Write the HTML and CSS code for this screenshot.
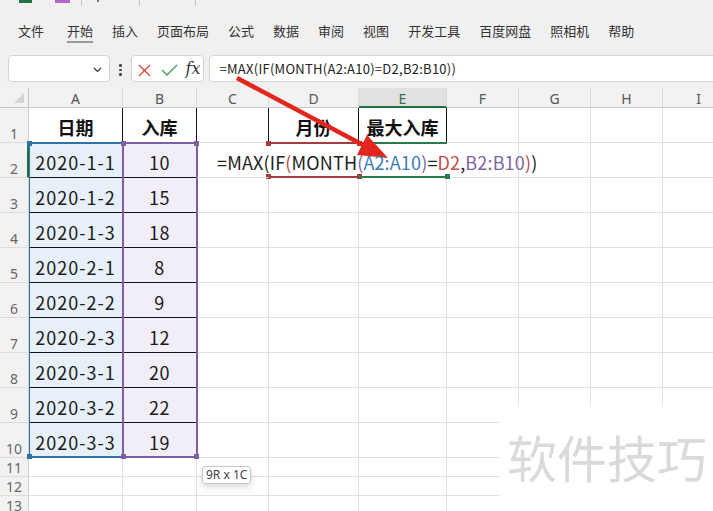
FILE: index.html
```html
<!DOCTYPE html>
<html lang="zh-CN">
<head>
<meta charset="utf-8">
<title>Excel</title>
<link rel="stylesheet" href="styles.css">
</head>
<body>
<div class="app">
  <div class="topstrip">
    <span class="ts-green"></span>
    <span class="ts-purple"></span>
    <span class="ts-sep s1"></span>
    <span class="ts-mark"></span>
    <span class="ts-sep s2"></span>
    <span class="ts-sep s3"></span>
  </div>
  <nav class="menu">
    <span class="mi">文件</span>
    <span class="mi active">开始</span>
    <span class="mi">插入</span>
    <span class="mi">页面布局</span>
    <span class="mi">公式</span>
    <span class="mi">数据</span>
    <span class="mi">审阅</span>
    <span class="mi">视图</span>
    <span class="mi">开发工具</span>
    <span class="mi">百度网盘</span>
    <span class="mi">照相机</span>
    <span class="mi">帮助</span>
  </nav>
  <div class="fbar">
    <div class="namebox">
      <svg class="chev" width="9" height="6" viewBox="0 0 9 6"><path d="M1 1 L4.5 4.5 L8 1" fill="none" stroke="#333" stroke-width="1.2"/></svg>
    </div>
    <div class="vdots"><i></i><i></i><i></i></div>
    <div class="fbtns">
      <svg width="13" height="13" viewBox="0 0 13 13"><path d="M1 1 L12 12 M12 1 L1 12" stroke="#e0453a" stroke-width="1.4" fill="none"/></svg>
      <svg width="17" height="12" viewBox="0 0 17 12"><path d="M1 6 L6 11 L16 1" stroke="#3f9f5a" stroke-width="1.4" fill="none"/></svg>
      <span class="fx">fx</span>
    </div>
    <div class="finput">=MAX(IF(MONTH(A2:A10)=D2,B2:B10))</div>
  </div>
  <div class="sheet">
    <div class="grid">
      <div class="hd corner"></div>
      <div class="hd">A</div><div class="hd">B</div><div class="hd">C</div><div class="hd">D</div><div class="hd act">E</div><div class="hd">F</div><div class="hd">G</div><div class="hd">H</div><div class="hd">I</div>

      <div class="rh">1</div>
      <div class="c b kr">日期</div><div class="c b kr">入库</div><div class="c kr"></div><div class="c b kr">月份</div><div class="c b kr">最大入库</div><div class="c"></div><div class="c"></div><div class="c"></div><div class="c"></div>

      <div class="rh act">2</div>
      <div class="c fa kr kb">2020-1-1</div><div class="c fb kr kb">10</div>
      <div class="c nr fml"><span>=MAX(IF</span><span class="pr">(</span><span>MONTH</span><span class="pp">(</span><span class="pb">A2:A10</span><span class="pp">)</span><span>=</span><span class="pr2">D2</span><span>,</span><span class="pp">B2:B10</span><span class="pr">)</span><span>)</span></div>
      <div class="c nr"></div><div class="c nr"></div><div class="c"></div><div class="c"></div><div class="c"></div><div class="c"></div>

      <div class="rh">3</div>
      <div class="c fa kr kb">2020-1-2</div><div class="c fb kr kb">15</div><div class="c"></div><div class="c"></div><div class="c"></div><div class="c"></div><div class="c"></div><div class="c"></div><div class="c"></div>

      <div class="rh">4</div>
      <div class="c fa kr kb">2020-1-3</div><div class="c fb kr kb">18</div><div class="c"></div><div class="c"></div><div class="c"></div><div class="c"></div><div class="c"></div><div class="c"></div><div class="c"></div>

      <div class="rh">5</div>
      <div class="c fa kr kb">2020-2-1</div><div class="c fb kr kb">8</div><div class="c"></div><div class="c"></div><div class="c"></div><div class="c"></div><div class="c"></div><div class="c"></div><div class="c"></div>

      <div class="rh">6</div>
      <div class="c fa kr kb">2020-2-2</div><div class="c fb kr kb">9</div><div class="c"></div><div class="c"></div><div class="c"></div><div class="c"></div><div class="c"></div><div class="c"></div><div class="c"></div>

      <div class="rh">7</div>
      <div class="c fa kr kb">2020-2-3</div><div class="c fb kr kb">12</div><div class="c"></div><div class="c"></div><div class="c"></div><div class="c"></div><div class="c"></div><div class="c"></div><div class="c"></div>

      <div class="rh">8</div>
      <div class="c fa kr kb">2020-3-1</div><div class="c fb kr kb">20</div><div class="c"></div><div class="c"></div><div class="c"></div><div class="c"></div><div class="c"></div><div class="c"></div><div class="c"></div>

      <div class="rh">9</div>
      <div class="c fa kr kb">2020-3-2</div><div class="c fb kr kb">22</div><div class="c"></div><div class="c"></div><div class="c"></div><div class="c"></div><div class="c"></div><div class="c"></div><div class="c"></div>

      <div class="rh">10</div>
      <div class="c fa kr kb">2020-3-3</div><div class="c fb kr kb">19</div><div class="c"></div><div class="c"></div><div class="c"></div><div class="c"></div><div class="c"></div><div class="c"></div><div class="c"></div>

      <div class="rh">11</div>
      <div class="c"></div><div class="c"></div><div class="c"></div><div class="c"></div><div class="c"></div><div class="c"></div><div class="c"></div><div class="c"></div><div class="c"></div>

      <div class="rh">12</div>
      <div class="c"></div><div class="c"></div><div class="c"></div><div class="c"></div><div class="c"></div><div class="c"></div><div class="c"></div><div class="c"></div><div class="c"></div>

      <div class="rh">13</div>
      <div class="c"></div><div class="c"></div><div class="c"></div><div class="c"></div><div class="c"></div><div class="c"></div><div class="c"></div><div class="c"></div><div class="c"></div>
    </div>

    <div class="rng rng-a"><i class="h h-tl"></i><i class="h h-bl"></i></div>
    <div class="rng rng-b"><i class="h h-tl"></i><i class="h h-tr"></i><i class="h h-bl"></i><i class="h h-br"></i></div>
    <div class="rng rng-d"><i class="h h-tl"></i><i class="h h-tr"></i><i class="h h-bl"></i><i class="h h-br"></i></div>
    <div class="rng rng-e"><i class="h h-br"></i></div>

    <div class="tip">9R x 1C</div>
    <div class="wm">软件技巧</div>
  </div>

  <svg class="arrow" width="713" height="511" viewBox="0 0 713 511">
    <line x1="237" y1="78" x2="365" y2="146" stroke="#e3261c" stroke-width="4.5"/>
    <polygon points="388,158 357,155 367,135" fill="#e3261c"/>
  </svg>
</div>
</body>
</html>
```

FILE: styles.css
```css
html, body {
  margin: 0;
  padding: 0;
}
body {
  width: 713px;
  height: 511px;
  overflow: hidden;
  background: #f0f0f0;
  font-family: "Noto Sans CJK SC", "Noto Sans", sans-serif;
}
.app {
  position: relative;
  width: 713px;
  height: 511px;
  overflow: hidden;
}

/* top strip */
.topstrip {
  display: flex;
  align-items: flex-start;
  height: 6px;
}
.ts-green {
  margin-left: 19px;
  width: 13px;
  height: 3px;
  background: #217346;
}
.ts-purple {
  margin-left: 23px;
  width: 15px;
  height: 3px;
  background: #b467c6;
}
.ts-sep {
  width: 1px;
  height: 6px;
  background: #c4c4c4;
}
.s1 { margin-left: 11px; }
.ts-mark {
  margin-left: 15px;
  width: 2px;
  height: 2px;
  background: #777;
}
.s2 { margin-left: 40px; }
.s3 { margin-left: 55px; }

/* menu */
.menu {
  display: flex;
  gap: 19px;
  padding: 15px 0 12px 18px;
  font-size: 13px;
  line-height: 20px;
  color: #333;
}
.mi {
  border-bottom: 2px solid transparent;
  white-space: nowrap;
}
.mi.active {
  margin-left: 4px;
  border-bottom-color: #9a9a9a;
}

/* formula bar */
.fbar {
  display: flex;
  align-items: center;
  height: 27px;
  padding-left: 8px;
}
.namebox {
  box-sizing: border-box;
  width: 102px;
  height: 27px;
  background: #fff;
  border: 1px solid #d3d3d3;
  border-radius: 4px;
  display: flex;
  justify-content: flex-end;
  align-items: center;
  padding-right: 7px;
  padding-top: 2px;
}
.vdots {
  display: flex;
  flex-direction: column;
  gap: 2px;
  margin-left: 9px;
  padding-top: 3px;
}
.vdots i {
  display: block;
  width: 2.5px;
  height: 2.5px;
  border-radius: 50%;
  background: #444;
}
.fbtns {
  box-sizing: border-box;
  margin-left: 9px;
  width: 73px;
  height: 27px;
  background: #fff;
  border: 1px solid #d3d3d3;
  border-radius: 4px;
  display: flex;
  align-items: center;
  padding-left: 6px;
  padding-top: 3px;
  gap: 10px;
}
.fx {
  font-family: "DejaVu Serif", "Liberation Serif", serif;
  font-style: italic;
  font-size: 16px;
  color: #333;
  margin-left: -2px;
  margin-top: -4px;
}
.finput {
  box-sizing: border-box;
  margin-left: 5px;
  flex: 1;
  height: 27px;
  background: #fff;
  border: 1px solid #d6d6d6;
  border-right: none;
  border-radius: 4px 0 0 4px;
  padding-left: 10px;
  font-size: 13px;
  letter-spacing: 0.27px;
  line-height: 25px;
  color: #222;
  white-space: nowrap;
}

/* sheet */
.sheet {
  position: relative;
  margin-top: 6px;
  width: 713px;
  height: 423px;
  background: #fff;
  overflow: hidden;
}
.grid {
  display: grid;
  grid-template-columns: 29px 94px 74px 72px 90px 88px 72px 72px 72px 72px;
  grid-template-rows: 20px repeat(10, 35px) repeat(3, 19px);
  width: 735px;
}
.hd {
  box-sizing: border-box;
  background: #f2f2f2;
  color: #555;
  font-family: "Noto Sans", sans-serif;
  font-size: 14px;
  line-height: 14px;
  display: flex;
  align-items: flex-end;
  justify-content: center;
  padding-bottom: 1px;
  border-right: 1px solid #dadada;
  border-bottom: 1px solid #c8c8c8;
}
.hd.act {
  background: #e1e1e1;
  border-bottom: 2px solid #217346;
  padding-bottom: 0;
  color: #3b6e50;
}
.corner {
  position: relative;
  border-right-color: #c8c8c8;
}
.corner::after {
  content: "";
  position: absolute;
  right: 4px;
  bottom: 4px;
  width: 0;
  height: 0;
  border-left: 10px solid transparent;
  border-bottom: 10px solid #d4d4d4;
}
.rh {
  box-sizing: border-box;
  background: #f2f2f2;
  color: #666;
  font-family: "Noto Sans", sans-serif;
  font-size: 14px;
  line-height: 16px;
  display: flex;
  align-items: flex-end;
  justify-content: center;
  border-right: 1px solid #cfcfcf;
  border-bottom: 1px solid #dcdcdc;
}
.rh.act {
  border-right: 2px solid #217346;
  padding-left: 1px;
}
.c {
  box-sizing: border-box;
  min-width: 0;
  display: flex;
  align-items: flex-end;
  justify-content: center;
  padding-bottom: 3px;
  border-right: 1px solid #e1e1e1;
  border-bottom: 1px solid #e1e1e1;
  font-size: 18px;
  line-height: 24px;
  color: #1a1a1a;
  white-space: nowrap;
}
.b { font-weight: 700; color: #111; }
.kr { border-right-color: #111; }
.kb { border-bottom-color: #111; }
.nr { border-right-color: transparent; }
.fa { background: #e7f0f9; letter-spacing: 1px; }
.fb { background: #f2eef8; letter-spacing: 0.5px; }
.fml {
  justify-content: flex-start;
  padding-left: 20px;
  position: relative;
  z-index: 1;
  color: #222;
  letter-spacing: 0.15px;
}
.pr { color: #b44a4a; }
.pp { color: #8064a2; }
.pb { color: #3a7db5; }
.pr2 { color: #c0504d; }

/* range finder overlays */
.rng {
  position: absolute;
  box-sizing: border-box;
  pointer-events: none;
}
.rng-a {
  left: 29px;
  top: 54px;
  width: 94px;
  height: 316px;
  border-top: 2px solid #2e72a6;
  border-bottom: 2px solid #2e72a6;
  border-left: 1px solid #2e72a6;
  color: #2e72a6;
}
.rng-b {
  left: 122px;
  top: 54px;
  width: 76px;
  height: 316px;
  border: 2px solid #7e5fa6;
  color: #7e5fa6;
}
.rng-d {
  left: 269px;
  top: 54px;
  width: 90px;
  height: 36px;
  border-top: 2px solid #a63c3c;
  border-bottom: 2px solid #a63c3c;
  color: #a63c3c;
}
.rng-e {
  left: 359px;
  top: 54px;
  width: 88px;
  height: 36px;
  border-top: 2px solid #2b7a4b;
  border-bottom: 2px solid #2b7a4b;
  color: #2b7a4b;
}
.h {
  position: absolute;
  width: 5px;
  height: 5px;
  background: currentColor;
}
.h-tl { left: -3px; top: -3px; }
.h-tr { right: -3px; top: -3px; }
.h-bl { left: -3px; bottom: -3px; }
.h-br { right: -3px; bottom: -3px; }

.tip {
  position: absolute;
  left: 202px;
  top: 378px;
  box-sizing: border-box;
  height: 18px;
  padding: 0 3px;
  background: #fff;
  border: 1px solid #c9c9c9;
  border-radius: 3px;
  box-shadow: 0 3px 6px rgba(0, 0, 0, 0.15);
  font-family: "Noto Sans", sans-serif;
  font-size: 12px;
  line-height: 16px;
  color: #444;
  white-space: nowrap;
}
.wm {
  position: absolute;
  left: 500px;
  top: 317px;
  width: 213px;
  height: 106px;
  box-sizing: border-box;
  background: #fff;
  padding: 24px 0 0 7px;
  font-size: 50px;
  line-height: 54px;
  color: #dadada;
  white-space: nowrap;
}

.arrow {
  position: absolute;
  left: 0;
  top: 0;
  pointer-events: none;
}
```
